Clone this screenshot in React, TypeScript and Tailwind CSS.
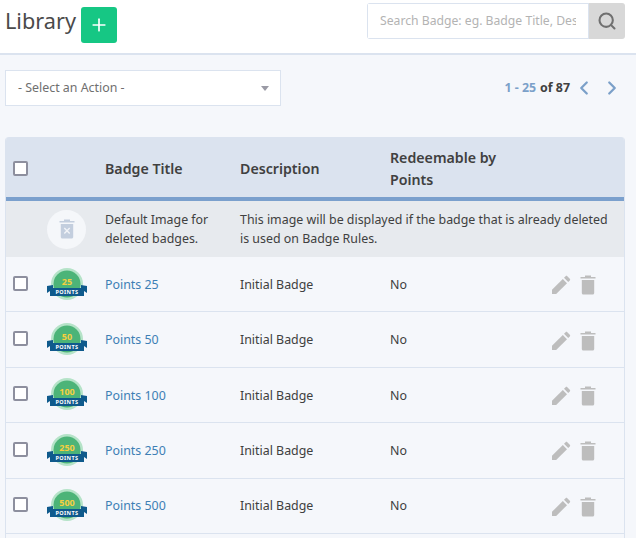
import { ChevronLeft, ChevronRight, Plus, Search } from "lucide-react";

const rows = [
  { title: "Points 25", value: "25" },
  { title: "Points 50", value: "50" },
  { title: "Points 100", value: "100" },
  { title: "Points 250", value: "250" },
  { title: "Points 500", value: "500" },
];

const Checkbox = () => (
  <span className="block h-[15px] w-[15px] shrink-0 rounded-[2px] border-2 border-[#8d8f9e] bg-white" />
);

const PointsBadge = ({ value }: { value: string }) => (
  <svg width="42" height="34" viewBox="0 0 42 34" className="block">
    <circle cx="21" cy="16" r="16" fill="#b5e3c8" />
    <circle cx="21" cy="16" r="13.5" fill="#4cb478" />
    <path d="M1 18 L7 17 L7 25 L4 23 L1 25 Z" fill="#0f5a8c" />
    <path d="M41 18 L35 17 L35 25 L38 23 L41 25 Z" fill="#0f5a8c" />
    <rect x="4" y="20" width="34" height="8" fill="#0f5a8c" />
    <text
      x="21"
      y="17"
      textAnchor="middle"
      fontSize="9"
      fontWeight="700"
      fill="#f6cf3f"
      fontFamily="'Noto Sans', sans-serif"
    >
      {value}
    </text>
    <text
      x="21"
      y="26.2"
      textAnchor="middle"
      fontSize="5.5"
      fontWeight="700"
      letterSpacing="0.4"
      fill="#ffffff"
      fontFamily="'Noto Sans', sans-serif"
    >
      POINTS
    </text>
  </svg>
);

const PencilIcon = () => (
  <svg width="20" height="20" viewBox="0 0 20 20" className="block">
    <path d="M1 14.8 L11.8 4 L16 8.2 L5.2 19 L1 19 Z" fill="#bdbdbd" />
    <path
      d="M13 2.8 L14.6 1.2 C15.1 .7 15.8 .7 16.3 1.2 L18.8 3.7 C19.3 4.2 19.3 4.9 18.8 5.4 L17.2 7 Z"
      fill="#bdbdbd"
    />
  </svg>
);

const TrashIcon = ({ color = "#bdbdbd", mark = false }: { color?: string; mark?: boolean }) => (
  <svg width="16" height="20" viewBox="0 0 16 20" className="block">
    <path d="M5 0.5 H11 V2 H15.5 V3.6 H0.5 V2 H5 Z" fill={color} />
    <path d="M1.8 5 H14.2 V18 C14.2 18.9 13.5 19.5 12.7 19.5 H3.3 C2.5 19.5 1.8 18.9 1.8 18 Z" fill={color} />
    {mark && <path d="M5.3 9 L10.7 14.4 M10.7 9 L5.3 14.4" stroke="#f2f4f8" strokeWidth="1.4" />}
  </svg>
);

export default function App() {
  return (
    <div className="h-[538px] w-[636px] overflow-hidden bg-[#f5f7fb] font-['Noto_Sans',sans-serif] text-[12.4px] text-[#404040]">
      {/* Header */}
      <header className="flex h-[55px] items-start justify-between border-b-2 border-[#dbe3ef] bg-white pl-[5px] pr-[11px]">
        <div className="flex items-start">
          <h1 className="mt-[5px] text-[21.7px] leading-[32px] text-[#4a4a4a]">Library</h1>
          <button className="ml-[5px] mt-[7px] flex h-9 w-9 items-center justify-center rounded-[3px] bg-[#16c784] text-white">
            <Plus size={20} strokeWidth={2} />
          </button>
        </div>
        <div className="mt-[3px] flex h-9 w-[258px] overflow-hidden rounded-[3px]">
          <input
            className="min-w-0 flex-1 border border-[#dbe3ef] bg-white px-3 text-[12.2px] outline-none placeholder:text-[#b3b3b3]"
            placeholder="Search Badge: eg. Badge Title, Description"
          />
          <div className="flex w-9 items-center justify-center bg-[#d8d8d8] text-[#707070]">
            <Search size={20} strokeWidth={2.5} />
          </div>
        </div>
      </header>

      {/* Toolbar */}
      <div className="mt-[15px] flex h-9 items-center justify-between pl-[5px] pr-[13px]">
        <div className="flex h-9 w-[276px] items-center justify-between border border-[#dbe3ef] bg-white pl-3 pr-[11px] text-[#6f6f6f]">
          <span>- Select an Action -</span>
          <span className="h-0 w-0 border-x-4 border-t-[5px] border-x-transparent border-t-[#9a9aa5]" />
        </div>
        <div className="flex items-center font-bold">
          <span className="text-[#7ba0c9]">1 - 25</span>
          <span className="ml-1">of 87</span>
          <ChevronLeft size={22} className="ml-[3px] text-[#7ba0c9]" strokeWidth={2.5} />
          <ChevronRight size={22} className="ml-[6px] text-[#7ba0c9]" strokeWidth={2.5} />
        </div>
      </div>

      {/* Table */}
      <div className="ml-[5px] mt-[31px] w-[620px] overflow-hidden rounded-t-[4px] border-x border-[#dbe3ef]">
        <div className="flex h-16 items-center border-b-4 border-[#7ba0cd] bg-[#dbe3ef] pt-[3px] text-[14.2px] font-semibold">
          <div className="flex w-[99px] pl-[7px]">
            <Checkbox />
          </div>
          <div className="w-[135px]">Badge Title</div>
          <div className="w-[150px]">Description</div>
          <div className="w-[130px] leading-[22px]">Redeemable by Points</div>
        </div>

        <div className="flex h-[56px] items-center bg-[#e7eaee]">
          <div className="flex w-[99px] pl-[41px]">
            <div className="flex h-[39px] w-[39px] items-center justify-center rounded-full bg-[#f5f7fa]">
              <TrashIcon color="#c3cede" mark />
            </div>
          </div>
          <div className="w-[135px] leading-[19px]">Default Image for deleted badges.</div>
          <div className="w-[380px] leading-[19px]">
            This image will be displayed if the badge that is already deleted is used on Badge Rules.
          </div>
        </div>

        {rows.map((row) => (
          <div key={row.title} className="flex h-[55.4px] items-center border-b border-[#dbe3ef] pt-[2px]">
            <div className="flex w-[99px] items-center pb-[4px] pl-[7px]">
              <Checkbox />
              <div className="ml-[18px] mt-[3px]">
                <PointsBadge value={row.value} />
              </div>
            </div>
            <a className="w-[135px] text-[#3d7fb5]">{row.title}</a>
            <div className="w-[150px]">Initial Badge</div>
            <div className="w-[161px]">No</div>
            <div className="flex items-center gap-[9px]">
              <PencilIcon />
              <TrashIcon />
            </div>
          </div>
        ))}
        {/* next row runs off the bottom of the page */}
        <div className="h-5" />
      </div>
    </div>
  );
}
